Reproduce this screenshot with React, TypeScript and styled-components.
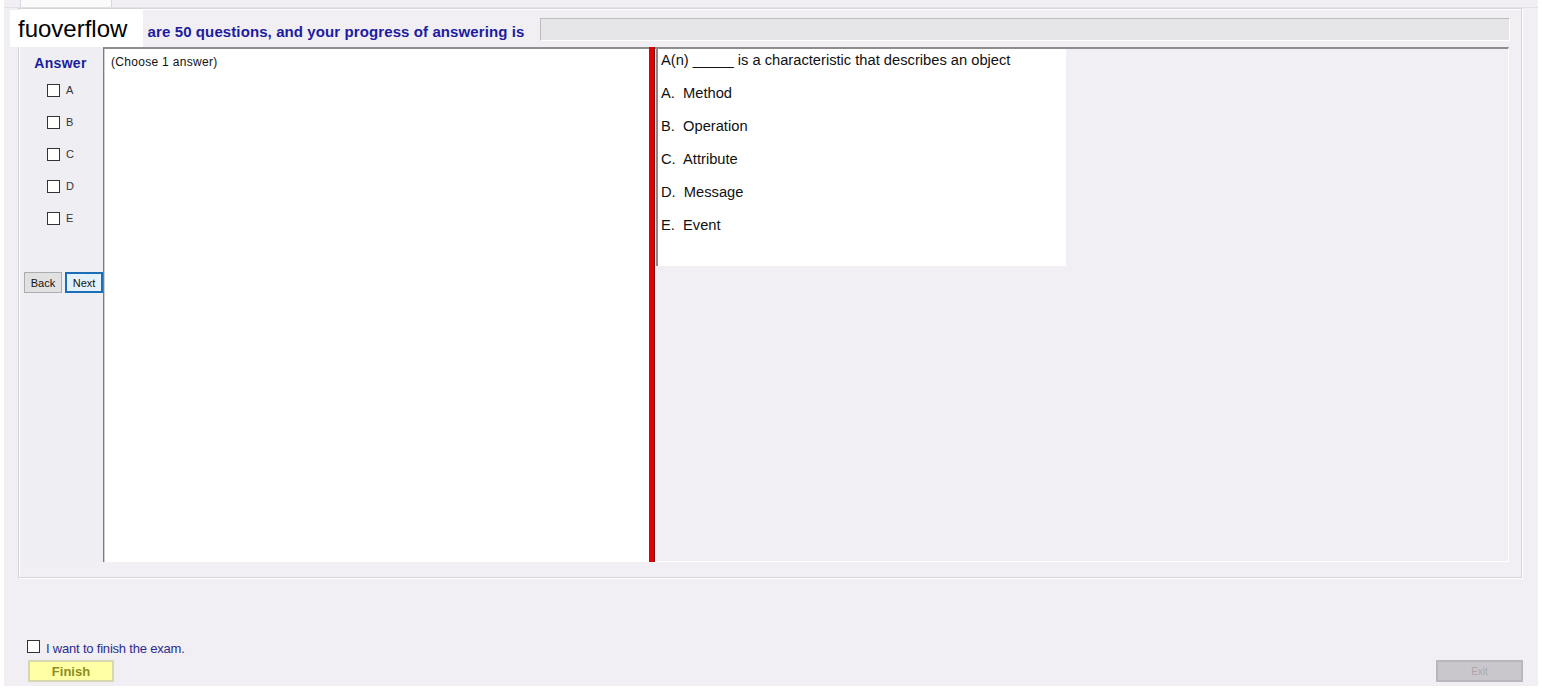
import React from 'react';
import styled, {createGlobalStyle} from "styled-components";

const GlobalStyle = createGlobalStyle`
    body {
      margin: 0;
      background-color: #ffffff;
      font-family: "Liberation Sans", Arial, sans-serif;
    }
`;

const Window = styled.div`
    position: relative;
    margin-left: 4px;
    width: 1534px;
    height: 686px;
    background-color: #f1eff3;
    box-sizing: border-box;
`;

const TabStrip = styled.div`
    height: 8px;
    display: flex;
    border-bottom: 1px solid #e2e0e4;
    box-sizing: border-box;
`;

const Tab = styled.div`
    margin-left: 16px;
    width: 90px;
    height: 7px;
    background-color: #fbfbfc;
    border-left: 1px solid #d8d6da;
    border-right: 1px solid #d8d6da;
`;

const GroupBox = styled.div`
    margin-left: 14px;
    width: 1504px;
    height: 570px;
    box-sizing: border-box;
    border: 1px solid #d6d4d8;
    box-shadow: inset 1px 1px 0 #ffffff, 1px 1px 0 #ffffff;
    padding: 9px 12px 14px 5px;
    display: flex;
    flex-direction: column;
`;

const Header = styled.div`
    display: flex;
    align-items: flex-start;
    height: 23px;
`;

const HeaderText = styled.div`
    margin-left: 78px;
    padding-top: 5px;
    font-size: 15px;
    letter-spacing: 0.1px;
    font-weight: bold;
    color: #1c1ca0;
    white-space: nowrap;
`;

const Progress = styled.div`
    flex: 1;
    margin-left: 16px;
    margin-right: -1px;
    height: 23px;
    box-sizing: border-box;
    background-color: #e6e5e8;
    border: 1px solid #bcbcbc;
    border-right-color: #ffffff;
    border-bottom-color: #ffffff;
`;

const Body = styled.div`
    margin-top: 6px;
    height: 515px;
    display: flex;
`;

const AnswerColumn = styled.div`
    width: 79px;
    display: flex;
    flex-direction: column;
    padding-top: 9px;
    box-sizing: border-box;
    background-color: #efeef2;
`;

const AnswerLabel = styled.div`
    padding-right: 6px;
    text-align: center;
    font-size: 14px;
    letter-spacing: 0.3px;
    line-height: 15px;
    font-weight: bold;
    color: #1c1ca0;
`;

const Options = styled.div`
    margin-top: 3px;
    display: flex;
    flex-direction: column;
`;

const OptionRow = styled.label`
    height: 32px;
    display: flex;
    align-items: center;
    padding-left: 23px;
    gap: 6px;
    font-size: 11px;
    color: #333;
`;

const Box = styled.span`
    width: 13px;
    height: 13px;
    flex-shrink: 0;
    box-sizing: border-box;
    background-color: #ffffff;
    border: 1px solid #333333;
    display: inline-block;
`;

const NavRow = styled.div`
    margin-top: 38px;
    display: flex;
    gap: 3px;
`;

const NavButton = styled.button<{ $focused?: boolean }>`
    width: 38px;
    height: 21px;
    padding: 0;
    font-family: "Liberation Sans", Arial, sans-serif;
    font-size: 11px;
    color: #111;
    background-color: ${p => p.$focused ? '#e5f1fb' : '#e1e1e1'};
    border: ${p => p.$focused ? '2px solid #1b6fb8' : '1px solid #adadad'};
    box-sizing: border-box;
`;

const ChoicePanel = styled.div`
    width: 546px;
    box-sizing: border-box;
    background-color: #ffffff;
    border-top: 2px solid #8e8e8e;
    border-left: 1px solid #7c7c7c;
    box-shadow: inset 1px 0 0 #cfcfcf;
    padding: 6px 0 0 7px;
    font-size: 12px;
    letter-spacing: 0.3px;
    color: #111;
`;

const Divider = styled.div`
    width: 6px;
    background-color: #e20000;
    border-right: 1px solid #7a1010;
    box-sizing: border-box;
`;

const QuestionArea = styled.div`
    flex: 1;
    background-color: #f1eff3;
    border-top: 2px solid #8e8e8e;
    border-right: 1px solid #ffffff;
    border-bottom: 1px solid #ffffff;
    padding-left: 1px;
`;

const QuestionCard = styled.div`
    width: 410px;
    height: 217px;
    box-sizing: border-box;
    background-color: #ffffff;
    border-left: 2px solid #8a8a8a;
    padding: 2px 0 0 3px;
    font-size: 14.7px;
    color: #111;
`;

const Line = styled.div`
    line-height: 18px;
    margin-bottom: 15px;
    white-space: pre;
`;

const Footer = styled.div`
    margin-top: 62px;
    display: flex;
    justify-content: space-between;
    align-items: flex-end;
    padding: 0 15px 0 23px;
`;

const FinishBlock = styled.div`
    display: flex;
    flex-direction: column;
`;

const FinishCheck = styled.label`
    display: flex;
    align-items: flex-start;
    gap: 6px;
    height: 14px;
`;

const FinishText = styled.span`
    margin-top: 1px;
    font-size: 13px;
    line-height: 15px;
    letter-spacing: -0.2px;
    color: #2c2c8e;
    white-space: nowrap;
`;

const FinishButton = styled.button`
    margin-top: 6px;
    margin-left: 1px;
    width: 86px;
    height: 22px;
    padding: 0;
    background-color: #ffffa6;
    border: 2px solid #d8d8b0;
    font-family: "Liberation Sans", Arial, sans-serif;
    font-size: 13px;
    font-weight: bold;
    color: #8c8c1e;
`;

const ExitButton = styled.button`
    width: 87px;
    height: 22px;
    padding: 0;
    background-color: #c9c7cc;
    border: 2px solid #b9b7bc;
    font-family: "Liberation Sans", Arial, sans-serif;
    font-size: 10px;
    color: #a9a7ad;
`;

const Watermark = styled.div`
    position: absolute;
    left: 6px;
    top: 10px;
    width: 133px;
    height: 37px;
    background-color: #ffffff;
    display: flex;
    align-items: center;
    padding-left: 8px;
    box-sizing: border-box;
    font-size: 24px;
    color: #000;
`;

const letters = ['A', 'B', 'C', 'D', 'E'];
const answers = ['Method', 'Operation', 'Attribute', 'Message', 'Event'];

function App() {
  return (
      <>
          <GlobalStyle/>
          <Window>
              <TabStrip><Tab/></TabStrip>
              <GroupBox>
                  <Header>
                      <HeaderText>There are 50 questions, and your progress of answering is</HeaderText>
                      <Progress/>
                  </Header>
                  <Body>
                      <AnswerColumn>
                          <AnswerLabel>Answer</AnswerLabel>
                          <Options>
                              {letters.map(l => (
                                  <OptionRow key={l}><Box/>{l}</OptionRow>
                              ))}
                          </Options>
                          <NavRow>
                              <NavButton>Back</NavButton>
                              <NavButton $focused>Next</NavButton>
                          </NavRow>
                      </AnswerColumn>
                      <ChoicePanel>(Choose 1 answer)</ChoicePanel>
                      <Divider/>
                      <QuestionArea>
                          <QuestionCard>
                              <Line>A(n) _____ is a characteristic that describes an object</Line>
                              {answers.map((a, i) => (
                                  <Line key={a}>{letters[i]}.  {a}</Line>
                              ))}
                          </QuestionCard>
                      </QuestionArea>
                  </Body>
              </GroupBox>
              <Footer>
                  <FinishBlock>
                      <FinishCheck><Box/><FinishText>I want to finish the exam.</FinishText></FinishCheck>
                      <FinishButton>Finish</FinishButton>
                  </FinishBlock>
                  <ExitButton>Exit</ExitButton>
              </Footer>
              <Watermark>fuoverflow</Watermark>
          </Window>
      </>
  );
}

export default App;
